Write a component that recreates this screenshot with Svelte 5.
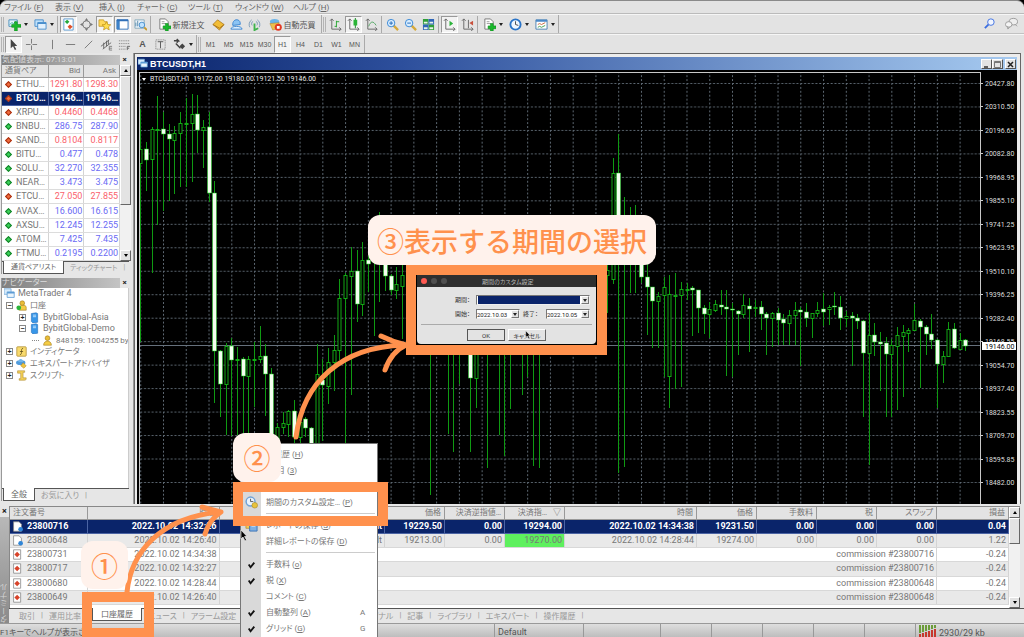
<script lang="ts">
  type Row = [string, string, string, 'up' | 'down'];
  type Candle = [number, number, number, number, 'w' | 'g'];

  const menus = [
    ['ファイル', 'F', 51], ['表示', 'V', 44], ['挿入', 'I', 38], ['チャート', 'C', 51],
    ['ツール', 'T', 47], ['ウィンドウ', 'W', 58], ['ヘルプ', 'H', 50]
  ] as const;

  const timeframes = ['M1', 'M5', 'M15', 'M30', 'H1', 'H4', 'D1', 'W1', 'MN'];

  const icons: Record<string, string> = {
    newChart: '<path d="M1 2h9v7H1z" fill="#e8f4ff" stroke="#4a8fbc"/><path d="M2 7l2-2 2 1 3-3" stroke="#3a9" fill="none"/><path d="M7 4h3v3h4v3h-4v4H7v-4H4V7h3z" fill="#19b82c" stroke="#0b8a1a" stroke-width=".6"/>',
    profiles: '<path d="M1 2h9v7H1z" fill="#bfe0fa" stroke="#4a8fcc"/><path d="M4 5h9v7H4z" fill="#e2f1fd" stroke="#4a8fcc"/><path d="M4 5.5h9" stroke="#4a8fcc" stroke-width="2"/>',
    market: '<path d="M2 1h10v12H2z" fill="#fff" stroke="#5b9bd0"/><path d="M3 4l2.500-2L8 4 5.500 6.500z" fill="#23a83a"/><path d="M6 9.500l2.500-2.500 3 2.500-3 2.500z" fill="#e0522a"/>',
    data: '<circle cx="7" cy="7" r="4" fill="none" stroke="#777"/><path d="M7 0l2 3H5zM7 14l2-3H5zM0 7l3-2v4zM14 7l-3-2v4z" fill="#777"/>',
    navigator: '<path d="M1 2h5l1 2h3v5H1z" fill="#ffd95a" stroke="#b98a10" stroke-width=".7"/><path d="M9 4l1.500 3 3.300.3-2.500 2.200.8 3.300L9 11l-3 1.800.8-3.300-2.500-2.200 3.300-.3z" fill="#ffdf4d" stroke="#b98a10" stroke-width=".7"/>',
    terminal: '<path d="M1 2h12v10H1z" fill="#fff" stroke="#2f6fb8"/><path d="M1 2h3v10H1z" fill="#3d82c9"/><path d="M1 2.500h12" stroke="#2f6fb8" stroke-width="2"/>',
    tester: '<path d="M1 2h10v9H1z" fill="#eef5fb" stroke="#8ab"/><path d="M2 9V5M4 9V3M6 9V6" stroke="#58a"/><circle cx="8.500" cy="7.500" r="3" fill="#bfe2ff" stroke="#4a8fcc"/><path d="M11 10l3 3" stroke="#c79a30" stroke-width="2"/>',
    order: '<path d="M2 1h6l3 3v8H2z" fill="#fff" stroke="#777"/><path d="M4 4h3M4 6h5" stroke="#999"/><path d="M8 6h3v2.500h3v3h-3V14H8v-2.500H5.500v-3H8z" fill="#19b82c" stroke="#0b8a1a" stroke-width=".6"/>',
    editor: '<path d="M1 7l5-5 7 5-5 6z" fill="#f2bd36" stroke="#a8741a" stroke-width=".8"/><path d="M1 7l7 4 5-4" stroke="#a8741a" fill="none"/>',
    signals: '<path d="M3 8c-1-8 9-8 8-1z" fill="#8cc4f4" stroke="#3c86d0"/><path d="M1 12c0-4 12-4 12 0z" fill="#dceefe" stroke="#3c86d0"/>',
    vps: '<path d="M2 10a6 6 0 0 1 2-8M12 10a6 6 0 0 0-2-8M4.500 8a3 3 0 0 1 1-4.500M9.500 8a3 3 0 0 0-1-4.500" stroke="#7a9ab8" fill="none"/><path d="M7 6v7l4-2" stroke="#3fb34c" stroke-width="2" fill="none"/>',
    auto: '<ellipse cx="6" cy="4" rx="5" ry="3" fill="#6cb4e8"/><path d="M1 6l10-1-1 6-6 2z" fill="#eec04c" stroke="#aa7a20" stroke-width=".5"/><circle cx="10" cy="10" r="3.800" fill="#e23a24"/><path d="M8.500 8.500h3v3h-3z" fill="#fff"/>',
    bars: '<path d="M3 1v11h10M1 3l2-2 2 2M11 10l2 2-2 2" stroke="#666" fill="none"/><path d="M8 3v7M8 4h3M6 9h2" stroke="#25a52f"/>',
    candles: '<path d="M3 1v11h10M1 3l2-2 2 2M11 10l2 2-2 2" stroke="#666" fill="none"/><path d="M9 0v11" stroke="#15851f"/><path d="M7 2h4v6H7z" fill="#29b436"/>',
    line: '<path d="M3 1v11h10M1 3l2-2 2 2M11 10l2 2-2 2" stroke="#666" fill="none"/><path d="M4 9c2-6 5-6 8-1" stroke="#54a864" fill="none"/>',
    zoomIn: '<path d="M8 8l5 5" stroke="#d6a93a" stroke-width="2.500"/><circle cx="5.500" cy="5.500" r="4" fill="#d8edff" stroke="#3385d6"/><path d="M3.500 5.500h4M5.500 3.500v4" stroke="#2268b8"/>',
    zoomOut: '<path d="M8 8l5 5" stroke="#d6a93a" stroke-width="2.500"/><circle cx="5.500" cy="5.500" r="4" fill="#d8edff" stroke="#3385d6"/><path d="M3.500 5.500h4" stroke="#2268b8"/>',
    tile: '<path d="M1 1h6v6H1zM7 7h6v6H7z" fill="#2f9e37"/><path d="M7 1h6v6H7zM1 7h6v6H1z" fill="#2f66b8"/><path d="M2 4h4v2H2zM8 4h4v2H8zM2 10h4v2H2zM8 10h4v2H8z" fill="#e8f4e8"/>',
    scroll: '<path d="M3 1v11h10M1 3l2-2 2 2M11 10l2 2-2 2" stroke="#666" fill="none"/><path d="M7 3l4 3-4 3z" fill="#2bb33a"/>',
    shift: '<path d="M3 1v11h10M1 3l2-2 2 2M11 10l2 2-2 2M8 2v9" stroke="#666" fill="none"/><path d="M13 3v5L9 5.500z" fill="#c8503c"/>',
    clock: '<circle cx="7" cy="7" r="5.500" fill="#eef6ff" stroke="#2a74c8" stroke-width="2"/><path d="M7 3.500V7l3 1" stroke="#444" fill="none"/>',
    period: '<circle cx="6" cy="6" r="4.800" fill="#eaf3fc" stroke="#6fa3d8" stroke-width="1.600"/><path d="M6 3v3h3" stroke="#555" fill="none"/><circle cx="10.500" cy="10" r="3" fill="#e8c33c" stroke="#a58422" stroke-width=".6"/>',
    template: '<path d="M1 2h12v10H1z" fill="#fff" stroke="#4a7fb0"/><path d="M1 3h12" stroke="#4a88c8" stroke-width="2"/><path d="M3 7l2-1 2 1 4-2" stroke="#c8683c" fill="none"/><path d="M3 10l2-1 2 1 4-2" stroke="#43a050" fill="none"/>',
    save: '<path d="M1 2h5l1 2h4v6H1z" fill="#f1cc55" stroke="#a8842c" stroke-width=".7"/><path d="M5 5h8v8H5z" fill="#7fb0e4" stroke="#3d74b4"/><path d="M7 5h4v3H7z" fill="#fff"/>',
    cursor: '<path d="M4 1v10l2.500-2 2 4 1.500-1-2-3.500H11z" fill="#444"/>',
    cross: '<path d="M7 1v5M7 8v5M1 7h5M8 7h5" stroke="#777"/>',
    vline: '<path d="M7 2v10" stroke="#777"/>',
    hline: '<path d="M2 7h10" stroke="#777"/>',
    trend: '<path d="M3 11l8-8" stroke="#777"/>',
    channel: '<path d="M1 9l9-7M3 12l9-7M4 5v6M7 3v6M9 2v5" stroke="#666"/><path d="M10 9h3M10 11h3M10 13h3M10 9v4" stroke="#666" stroke-width=".8"/>',
    fibo: '<path d="M1 3h12M1 6h12M1 9h7M1 12h7" stroke="#777" stroke-dasharray="1 1"/><path d="M10 13V9h3M10 11h2" stroke="#666" fill="none"/>',
    label: '<path d="M2 2h10v10H2z" fill="none" stroke="#777" stroke-dasharray="1 1"/><path d="M4 4h6M7 4v7" stroke="#555"/>',
    arrows: '<path d="M1 3h5L4 1M4 5l2-2M3 6l5 5" stroke="#444" stroke-width="1.500" fill="none"/><path d="M10 6l3 3-3 3-3-3z" fill="#444"/>',
    search: '<path d="M2 12l4-4" stroke="#3c6ee0" stroke-width="2"/><circle cx="8.500" cy="5.500" r="3.500" fill="#f0f5ff" stroke="#3c6ee0"/>',
    chart: '<path d="M0 1h9v7H0z" fill="#d7ebfb" stroke="#6fa6d6"/><path d="M4 5h9v7H4z" fill="#eaf5fd" stroke="#5c9bd4"/><path d="M4 6h9" stroke="#5c9bd4" stroke-width="2"/>',
    accounts: '<circle cx="8" cy="4" r="3" fill="#e9bd38" stroke="#9c7414" stroke-width=".7"/><path d="M4 13V9c1-3 9-3 9 0v4z" fill="#f4cc44" stroke="#9c7414" stroke-width=".7"/><circle cx="3.500" cy="10" r="3" fill="#2bb53b"/>',
    server: '<path d="M3 2l6-1 2 1v11l-6 1-2-2z" fill="#3796e8" stroke="#1d67b4" stroke-width=".7"/><path d="M5 4h4M5 6h4" stroke="#d7edff"/>',
    user: '<circle cx="7" cy="4" r="3" fill="#e9bd38" stroke="#9c7414" stroke-width=".7"/><path d="M2 13c0-7 10-7 10 0z" fill="#f4cc44" stroke="#9c7414" stroke-width=".7"/>',
    indicator: '<rect x="1" y="1" width="12" height="12" rx="1" fill="#f8da6c" stroke="#b1913a"/><path d="M9 3c-2 0-2 2-2 4s0 4-2 4M5 7h4" stroke="#5a4a18" fill="none"/>',
    expert: '<ellipse cx="6" cy="6" rx="6" ry="3" fill="#4f9bdc"/><path d="M3 5c0-5 6-5 6 0z" fill="#6fb5ec"/><path d="M9 6l4 4-3 3-4-3z" fill="#efc440" stroke="#a8801c" stroke-width=".6"/>',
    script: '<path d="M2 1h9v2H9v7h4c0 3-1 3-2 3H4v-2h2V4H2z" fill="#f4d258" stroke="#a8842c" stroke-width=".7"/>'
  };

  const quotes: Row[] = [
    ['ETHU…', '1291.80', '1298.30', 'down'],
    ['BTCU…', '19146…', '19146…', 'down'],
    ['XRPU…', '0.4460', '0.4468', 'down'],
    ['BNBU…', '286.75', '287.90', 'up'],
    ['SAND…', '0.8104', '0.8117', 'down'],
    ['BITU…', '0.477', '0.478', 'up'],
    ['SOLU…', '32.270', '32.355', 'up'],
    ['NEAR…', '3.473', '3.475', 'up'],
    ['ETCU…', '27.050', '27.855', 'down'],
    ['AVAX…', '16.600', '16.615', 'up'],
    ['AXSU…', '12.245', '12.255', 'up'],
    ['ATOM…', '7.425', '7.435', 'up'],
    ['FTMU…', '0.2195', '0.2200', 'up']
  ];

  const tree = [
    { level: 0, icon: 'chart', text: 'MetaTrader 4', box: '' },
    { level: 1, icon: 'accounts', text: '口座', box: '−' },
    { level: 2, icon: 'server', text: 'BybitGlobal-Asia', box: '+' },
    { level: 2, icon: 'server', text: 'BybitGlobal-Demo', box: '−' },
    { level: 3, icon: 'user', text: '848159: 1004255 by', box: '' },
    { level: 1, icon: 'indicator', text: 'インディケータ', box: '+' },
    { level: 1, icon: 'expert', text: 'エキスパートアドバイザ', box: '+' },
    { level: 1, icon: 'script', text: 'スクリプト', box: '+' }
  ];

  const prices = [
    '20427.80', '20310.50', '20196.65', '20082.80', '19968.95', '19855.10', '19741.25', '19623.95', '19510.10',
    '19396.25', '19282.40', '19168.55', '19054.70', '18937.40', '18823.55', '18709.70', '18595.85', '18482.00'
  ];

  const firstX = 1.3;
  const stepX = 5.69;
  const firstY = 11;
  const stepY = 23.47;

  // bars left to right: high, body top, body bottom, low (screen y, chart starts at 72)
  const runs: { from: number; bars: Candle[] }[] = [
    {
      from: 0,
      bars: [
        [109, 149, 163, 342, 'g'], [142, 149, 160, 191, 'w'], [127, 129, 159, 273, 'g'], [96, 129, 129, 225, 'g'],
        [112, 129, 134, 211, 'w'], [124, 134, 139, 201, 'w'], [126, 133, 140, 194, 'g'], [112, 123, 133, 187, 'g'],
        [98, 123, 123, 187, 'g'], [94, 114, 123, 182, 'g'], [95, 114, 130, 153, 'w'], [120, 127, 130, 168, 'g'],
        [112, 127, 193, 202, 'w'], [181, 193, 351, 403, 'w'], [350, 351, 384, 417, 'w'], [343, 346, 384, 435, 'g'],
        [338, 346, 360, 436, 'w'], [347, 359, 359, 435, 'g'], [357, 359, 376, 435, 'w'], [356, 359, 376, 435, 'g'],
        [342, 359, 359, 407, 'g'], [326, 356, 359, 363, 'g'], [344, 356, 374, 416, 'w'], [368, 374, 436, 460, 'w'],
        [423, 427, 440, 450, 'g'], [412, 423, 427, 434, 'g'], [410, 411, 424, 437, 'g'], [400, 411, 437, 450, 'w'],
        [415, 422, 437, 445, 'g'], [417, 419, 428, 437, 'w'], [427, 428, 450, 460, 'w'], [344, 374, 450, 460, 'g'],
        [359, 380, 385, 441, 'w'], [348, 362, 386, 404, 'g'], [335, 350, 362, 391, 'g'], [279, 298, 350, 360, 'g'],
        [273, 275, 298, 450, 'g'], [247, 271, 276, 395, 'g'], [250, 271, 304, 322, 'w'], [242, 260, 304, 316, 'g'],
        [235, 260, 264, 292, 'w'], [230, 250, 262, 336, 'g'], [212, 240, 250, 302, 'g'], [235, 240, 276, 291, 'w'],
        [274, 276, 290, 295, 'w'], [267, 284, 290, 299, 'g'], [262, 275, 286, 339, 'g']
      ]
    },
    { from: 51, bars: [[280, 300, 330, 495, 'g']] },
    { from: 54, bars: [[290, 300, 320, 434, 'g'], [290, 300, 330, 452, 'g'], [290, 300, 330, 384, 'g']] },
    { from: 58, bars: [[290, 320, 378, 452, 'w'], [290, 320, 378, 408, 'g']] },
    { from: 61, bars: [[290, 300, 320, 468, 'g']] },
    { from: 63, bars: [[290, 300, 320, 435, 'g'], [290, 300, 320, 456, 'g'], [290, 300, 320, 409, 'g']] },
    {
      from: 67,
      bars: [[290, 300, 320, 395, 'g'], [290, 300, 320, 377, 'g'], [290, 300, 320, 466, 'g'], [290, 300, 320, 468, 'g']]
    },
    {
      from: 82,
      bars: [
        [255, 270, 275, 313, 'g'], [158, 173, 279, 284, 'g'], [134, 173, 235, 473, 'w'], [197, 235, 250, 467, 'g'],
        [207, 240, 250, 293, 'g'], [205, 240, 262, 293, 'g'], [255, 262, 277, 283, 'w'], [260, 277, 287, 335, 'w'],
        [287, 287, 301, 348, 'w'], [292, 296, 301, 348, 'g'], [277, 287, 295, 377, 'g'], [275, 294, 376, 408, 'g'],
        [273, 295, 295, 389, 'g'], [282, 289, 295, 387, 'g'], [283, 289, 289, 300, 'g'], [286, 288, 290, 336, 'w'],
        [290, 290, 308, 333, 'w'], [305, 308, 314, 334, 'w'], [302, 309, 314, 338, 'g'], [300, 304, 310, 312, 'g'],
        [290, 305, 307, 315, 'w'], [290, 307, 309, 376, 'w'], [303, 309, 310, 377, 'w'], [310, 311, 314, 355, 'w'],
        [294, 305, 314, 318, 'g'], [298, 306, 309, 352, 'w'], [300, 307, 307, 317, 'g'], [301, 307, 314, 330, 'w'],
        [312, 314, 318, 355, 'w'], [312, 313, 318, 347, 'g'], [308, 313, 320, 345, 'w'], [314, 319, 323, 345, 'w'],
        [310, 315, 323, 345, 'g'], [302, 310, 315, 345, 'g'], [307, 310, 312, 366, 'w'], [303, 312, 318, 327, 'w'],
        [313, 313, 318, 338, 'g'], [302, 310, 313, 317, 'g'], [293, 309, 312, 326, 'w'], [305, 307, 309, 325, 'g'],
        [292, 306, 307, 315, 'w'], [296, 307, 318, 330, 'w'], [311, 316, 318, 327, 'g'], [312, 316, 318, 366, 'w'],
        [314, 318, 321, 329, 'w'], [320, 321, 353, 417, 'w'], [313, 335, 353, 465, 'g'], [323, 335, 342, 356, 'w'],
        [332, 342, 344, 391, 'w'], [337, 343, 354, 417, 'w'], [339, 345, 354, 417, 'g'], [327, 335, 346, 410, 'g'],
        [325, 332, 336, 397, 'g'], [328, 330, 333, 352, 'g'], [304, 320, 330, 331, 'g'], [319, 321, 327, 388, 'w'],
        [325, 327, 334, 355, 'w'], [314, 334, 340, 349, 'w'], [339, 340, 364, 408, 'w'], [351, 356, 364, 383, 'g'],
        [322, 329, 356, 357, 'g'], [323, 329, 348, 349, 'w'], [333, 340, 349, 350, 'g'], [339, 340, 346, 351, 'w']
      ]
    }
  ];

  const candles = runs.flatMap(({ from, bars }) =>
    bars.map(([high, top, bottom, low, kind], i) => ({
      x: Math.round(firstX + (from + i) * stepX) - 1,
      high: high - 73,
      top: top - 73,
      height: Math.max(1, bottom - top),
      low: low - 73,
      kind
    }))
  );

  const orders = [
    { id: '23800716', time: '2022.10.02 14:32:26', symbol: 'btcusdt', open: '19229.50', sl: '0.00', tp: '19294.00', close: '2022.10.02 14:34:38', price: '19231.50', profit: '0.04' },
    { id: '23800648', time: '2022.10.02 14:26:40', symbol: 'btcusdt', open: '19213.00', sl: '0.00', tp: '19270.00', close: '2022.10.02 14:28:44', price: '19274.00', profit: '1.22' }
  ];

  const commissions = [
    ['23800731', '2022.10.02 14:34:38', '23800716'],
    ['23800717', '2022.10.02 14:32:27', '23800716'],
    ['23800680', '2022.10.02 14:28:44', '23800648'],
    ['23800649', '2022.10.02 14:26:40', '23800648']
  ];

  const tabs = ['取引', '運用比率', '口座履歴', 'ニュース', 'アラーム設定', 'メールボックス', 'マーケット', 'シグナル', '記事', 'ライブラリ', 'エキスパート', '操作履歴'];

  const contextItems = [
    { text: '全履歴', key: 'H' },
    { text: '3ヶ月', key: '3' },
    { text: '1ヶ月', key: 'M' },
    { text: '期間のカスタム設定…', key: 'P', icon: 'period' },
    { sep: true },
    { text: 'レポートの保存', key: 'S', icon: 'save' },
    { text: '詳細レポートの保存', key: 'D' },
    { sep: true },
    { text: '手数料', key: 'o', checked: true },
    { text: '税', key: 'X', checked: true },
    { text: 'コメント', key: 'C' },
    { text: '自動整列', key: 'A', checked: true, hint: 'A' },
    { text: 'グリッド', key: 'G', checked: true, hint: 'G' }
  ];
</script>

{#snippet icon(name: string)}
  <svg class="icon" viewBox="0 0 14 14" aria-hidden="true">{@html icons[name]}</svg>
{/snippet}

{#snippet tool(name: string, on = false)}
  <button class="tool" class:on aria-label={name}>{@render icon(name)}</button>
{/snippet}

{#snippet drop(name: string)}
  <button class="tool drop" aria-label={name}>{@render icon(name)}<i class="caret"></i></button>
{/snippet}

{#snippet pointer()}
  <svg viewBox="0 0 8 13" aria-hidden="true"><path d="M1 1v9l2-2 2 4 1.500-1-2-3.500H7z" fill="#000" stroke="#fff" stroke-width=".6" /></svg>
{/snippet}

<div class="app">
  <nav class="menubar">
    {#each menus as [name, key, width]}
      <button style:width="{width}px">{name} (<u>{key}</u>)</button>
    {/each}
  </nav>

  <div class="toolrow">
    <div class="toolbar">
      {@render drop('newChart')}
      {@render drop('profiles')}
      <i class="sep"></i>
      {@render tool('market', true)}
      {@render tool('data')}
      {@render tool('navigator', true)}
      {@render tool('terminal', true)}
      {@render tool('tester')}
      <i class="sep"></i>
      <button class="tool wide">{@render icon('order')}新規注文</button>
      {@render tool('editor')}
      {@render tool('signals')}
      {@render tool('vps')}
      <button class="tool wide">{@render icon('auto')}自動売買</button>
    </div>
    <div class="toolbar">
      {@render tool('bars')}
      {@render tool('candles', true)}
      {@render tool('line')}
      <i class="sep"></i>
      {@render tool('zoomIn')}
      {@render tool('zoomOut')}
      {@render tool('tile')}
      <i class="sep"></i>
      {@render tool('scroll', true)}
      {@render tool('shift')}
      <i class="sep"></i>
      {@render drop('order')}
      {@render drop('clock')}
      {@render drop('template')}
    </div>
    <div class="corner">
      {@render tool('search')}
      <button class="tool" aria-label="chat">
        <svg class="icon" viewBox="0 0 14 14" aria-hidden="true">
          <ellipse cx="9" cy="5" rx="4.500" ry="3.500" fill="#eee" stroke="#999" />
          <ellipse cx="4" cy="8" rx="3.500" ry="3" fill="#f4f4f4" stroke="#999" />
          <path d="M3 10v3l2-2M11 8l2 2" stroke="#999" fill="none" />
        </svg>
      </button>
    </div>
  </div>

  <div class="toolrow second">
    <div class="toolbar">
      {@render tool('cursor', true)}
      {@render tool('cross')}
      <i class="sep blank"></i>
      {@render tool('vline')}
      {@render tool('hline')}
      {@render tool('trend')}
      {@render tool('channel')}
      {@render tool('fibo')}
      <button class="tool letter">A</button>
      {@render tool('label')}
      {@render drop('arrows')}
    </div>
    <div class="toolbar">
      {#each timeframes as tf}
        <button class="tool" class:on={tf === 'H1'}>{tf}</button>
      {/each}
    </div>
  </div>

  <main class="workspace">
    <aside class="side">
      <section class="panel">
        <header class="caption"><span>気配値表示: 07:13:01</span><button aria-label="close">×</button></header>
        <div class="list">
          <table class="quotes">
            <thead>
              <tr><th>通貨ペア</th><th>Bid</th><th>Ask</th></tr>
            </thead>
            <tbody>
              {#each quotes as [symbol, bid, ask, dir], i}
                <tr class={dir} class:selected={i === 1}>
                  <td><i class="mark"></i>{symbol}</td><td>{bid}</td><td>{ask}</td>
                </tr>
              {/each}
            </tbody>
          </table>
          <div class="scroll"><i class="arrow up"></i><i class="thumb long"></i><i class="arrow"></i></div>
        </div>
        <div class="tabs small"><button class="active">通貨ペアリスト</button><button>ティックチャート</button><span>|</span></div>
      </section>

      <section class="panel grow">
        <header class="caption"><span>ナビゲーター</span><button aria-label="close">×</button></header>
        <div class="treebox">
          <ul class="tree">
            {#each tree as node}
              <li class="level{node.level}">
                {#if node.level > 0}<i class="box" class:leaf={!node.box}>{node.box}</i>{/if}
                {@render icon(node.icon)}<span>{node.text}</span>
              </li>
            {/each}
          </ul>
        </div>
        <div class="tabs"><button class="active">全般</button><button>お気に入り</button><span>|</span></div>
      </section>
    </aside>

    <section class="chart">
      <header class="title">
        {@render icon('chart')}<b>BTCUSDT,H1</b>
        <button aria-label="minimize"><svg viewBox="0 0 9 9"><path d="M2 7h4" stroke="#333" stroke-width="1.500" /></svg></button>
        <button aria-label="maximize"><svg viewBox="0 0 9 9"><path d="M1.500 1.500h6v6h-6zM1 2.500h7" fill="none" stroke="#777" /></svg></button>
        <button class="close" aria-label="close"><svg viewBox="0 0 9 9"><path d="M2 2l5 5M7 2L2 7" stroke="#222" stroke-width="1.500" /></svg></button>
      </header>
      <div class="canvas">
        <div class="plot">
          <svg class="fill" aria-hidden="true">
            <defs>
              <pattern id="grid" x="23" y={firstY - 1} width={stepX * 4} height={stepY} patternUnits="userSpaceOnUse">
                <path d="M0 .5H23" stroke="#5d6872" stroke-dasharray="2 1.800" />
                <path d="M.5 0V24" stroke="#5d6872" stroke-dasharray="2 1.900" />
              </pattern>
            </defs>
            <rect width="100%" height="100%" fill="url(#grid)" />
            <line x1="0" x2="100%" y1="272.500" y2="272.500" stroke="#66717d" />
            {#each candles as c}
              <line x1={c.x + 0.5} x2={c.x + 0.5} y1={c.high} y2={c.low} stroke="#0f9a12" />
              {#if c.kind === 'w'}
                <rect x={c.x - 1.5} y={c.top} width="4" height={c.height} fill="#f4fff0" stroke="#19d01c" stroke-width=".5" />
              {:else}
                <rect x={c.x - 1} y={c.top + 0.5} width="3" height={c.height} fill="#000" stroke="#12a814" />
              {/if}
            {/each}
          </svg>
          <p class="ohlc"><i class="caret"></i>BTCUSDT,H1&nbsp; 19172.00 19180.00 19121.50 19146.00</p>
        </div>
        <svg class="axis" role="img" aria-label="price">
          {#each prices as price, i}
            {@const y = Math.round(firstY + i * stepY)}
            <path d="M0 {y}.500h2" stroke="#ccc" />
            <text x="4" y={y + 3}>{price}</text>
          {/each}
          <rect x="1" y="270" width="34" height="8" fill="#fff" />
          <text class="now" x="4" y="277">19146.00</text>
        </svg>
      </div>
    </section>
  </main>

  <section class="terminal">
    <div class="strip"><button aria-label="close">×</button><span>ターミナル</span></div>
    <div class="body">
      <div class="history">
        <table class="orders">
          <colgroup>
            <col class="c77" /><col class="c132" /><col /><col class="c60" /><col class="c60" /><col class="c60" />
            <col class="c132" /><col class="c60" /><col class="c60" /><col class="c60" /><col class="c60" /><col class="c72" />
          </colgroup>
          <thead>
            <tr>
              <th>注文番号</th><th>時間</th><th>通貨ペア</th><th>価格</th><th>決済逆指値…</th><th>決済指… &nbsp; ▽</th>
              <th>時間</th><th>価格</th><th>手数料</th><th>税</th><th>スワップ</th><th>損益</th>
            </tr>
          </thead>
          <tbody>
            {#each orders as o, i}
              <tr class:selected={i === 0}>
                <td>
                  <svg class="icon" viewBox="0 0 14 14" aria-hidden="true">
                    <path d="M2 1h7l3 3v9H2z" fill="#fff" stroke="#888" /><circle cx="11" cy="10.500" r="3" fill="#2f86d8" />
                  </svg>{o.id}
                </td>
                <td>{o.time}</td><td>{o.symbol}</td><td>{o.open}</td><td>{o.sl}</td><td class:hit={i === 1}>{o.tp}</td>
                <td>{o.close}</td><td>{o.price}</td><td>0.00</td><td>0.00</td><td>0.00</td><td>{o.profit}</td>
              </tr>
            {/each}
            {#each commissions as [id, time, ref]}
              <tr>
                <td>
                  <svg class="icon" viewBox="0 0 14 14" aria-hidden="true">
                    <path d="M2 1h9v12H2z" fill="#fff" stroke="#888" /><path d="M6.500 3.500L10 7l-3.500 3.500L3 7z" fill="#d8432a" />
                  </svg>{id}
                </td>
                <td>{time}</td><td colspan="9">commission #{ref}</td><td>-0.24</td>
              </tr>
            {/each}
          </tbody>
        </table>
        <div class="scroll"><i class="arrow up"></i><i class="thumb"></i><i class="arrow"></i></div>
      </div>
      <div class="tabs bottom">
        {#each tabs as tab}
          <button class:active={tab === '口座履歴'}>{tab}</button>
          {#if tab !== '口座履歴' && tab !== '運用比率'}<span>|</span>{/if}
        {/each}
      </div>
    </div>
  </section>

  <footer class="status">
    <span class="help">F1キーでヘルプが表示されます</span>
    <span class="profile">Default</span>
    <span></span><span></span><span></span><span></span><span></span><span></span>
    <span class="net">
      <svg viewBox="0 0 17 12" aria-hidden="true">
        <path d="M1 0v8M4 0v7M7 0v6M10 0v5M13 0v4M16 0v3" stroke="#6c9c3a" stroke-width="2" />
        <path d="M1 9v3M4 8v4M7 7v5M10 6v6M13 5v7M16 4v8" stroke="#c8372c" stroke-width="2" />
      </svg>2930/29 kb
    </span>
  </footer>

  <div class="context" role="menu">
    {#each contextItems as item}
      {#if item.sep}
        <hr />
      {:else}
        <button role="menuitem">
          <span class="gutter">{#if item.icon}{@render icon(item.icon)}{:else if item.checked}<svg class="icon" viewBox="0 0 14 14"><path d="M4 7l2 3 4-5" stroke="#111" stroke-width="2" fill="none" /></svg>{/if}</span>
          <span class="name">{item.text} (<u>{item.key}</u>)</span>
          {#if item.hint}<kbd>{item.hint}</kbd>{/if}
        </button>
      {/if}
    {/each}
  </div>

  <div class="frame frame-tab"></div>
  <div class="frame frame-menu"></div>
  <form class="frame frame-dialog">
    <div class="dialog">
      <div class="bar"><i class="light red"></i><i class="light"></i><i class="light"></i><span>期間のカスタム設定</span></div>
      <div class="fields">
        <label for="range">期間：</label>
        <span class="combo span"><select id="range" class="navy"><option></option></select><i><b class="caret"></b></i></span>
        <label for="from">開始：</label>
        <span class="combo"><select id="from"><option>2022.10.03</option></select><i><b class="caret"></b></i></span>
        <label for="to">終了：</label>
        <span class="combo"><select id="to"><option>2022.10.05</option></select><i><b class="caret"></b></i></span>
      </div>
      <div class="actions"><button type="button" class="ok">OK</button><button type="button">キャンセル</button></div>
    </div>
  </form>

  <svg class="arrows" aria-hidden="true">
    <g fill="none" stroke="#ff914d" stroke-width="5" stroke-linecap="round" stroke-linejoin="round">
      <path d="M127 592C131 552 160 518 219 512" />
      <path d="M202 507Q212 510 221 512Q209 520 205 534" />
      <path d="M296 437C303 382 341 347 404 345" />
      <path d="M381 336Q393 342 406 345Q391 352 385 370" />
    </g>
  </svg>

  <div class="badge one">①</div>
  <div class="badge two">②</div>
  <div class="badge three">③表示する期間の選択</div>

  <div class="mouse first">{@render pointer()}</div>
  <div class="mouse last">{@render pointer()}</div>
</div>

<style>
  :global(body) {
    background: #000;
  }

  .app {
    position: relative;
    display: flex;
    flex-direction: column;
    height: 100vh;
    overflow: hidden;
    box-sizing: border-box;
    border-top: 1px solid #8a8a8a;
    border-radius: 7px 7px 0 0;
    background: #e3e3e3;
    color: #777;
    font: 9px/11px Roboto, 'Noto Sans CJK JP', sans-serif;
    font-feature-settings: 'palt';
  }

  .app *,
  .app *::before {
    box-sizing: border-box;
  }

  button,
  select {
    margin: 0;
    padding: 0;
    border: 0;
    background: none;
    color: inherit;
    font: inherit;
    font-feature-settings: inherit;
    white-space: nowrap;
  }

  svg {
    display: block;
  }

  .icon {
    width: 13px;
    height: 13px;
    flex: none;
  }

  .caret {
    width: 0;
    height: 0;
    border: 2px solid transparent;
    border-top: 3px solid #222;
    border-bottom: 0;
  }

  .menubar {
    display: flex;
    height: 13px;
    padding-left: 4px;
    border-bottom: 1px solid #bbb;
    color: #666;
    font-size: 8px;
  }

  .menubar button {
    text-align: left;
  }

  .toolrow {
    display: flex;
    height: 20px;
    border-top: 1px solid #f6f6f6;
    border-bottom: 1px solid #c2c2c2;
  }

  .second {
    height: 19px;
    border-bottom: 0;
  }

  .toolbar {
    display: flex;
    align-items: center;
    gap: 1px;
    padding: 0 1px 0 1px;
    border-right: 1px solid #aaa;
  }

  .toolbar::before {
    content: '';
    width: 3px;
    height: 15px;
    border: 1px solid #b4b4b4;
    border-width: 0 1px;
  }

  .tool {
    display: flex;
    align-items: center;
    justify-content: center;
    width: 17px;
    height: 17px;
    color: #555;
    font: 7px 'Liberation Sans', sans-serif;
  }

  .tool.on {
    border: 1px solid #999;
    border-right-color: #fff;
    border-bottom-color: #fff;
    background: #f3f3f3;
  }

  .tool.drop {
    width: 25px;
    gap: 3px;
  }

  .tool.wide {
    width: 56px;
    gap: 2px;
    font: 8px 'Noto Sans CJK JP', sans-serif;
  }

  .tool.letter {
    font-size: 9px;
    font-weight: bold;
  }

  .sep {
    width: 1px;
    height: 17px;
    margin-right: 1px;
    background: #aaa;
  }

  .blank {
    background: none;
  }

  .corner {
    display: flex;
    gap: 5px;
    margin-left: auto;
    padding-right: 4px;
  }

  .workspace {
    display: flex;
    flex: 1;
    min-height: 0;
    background: #e6e6e6;
  }

  .side {
    display: flex;
    flex-direction: column;
    gap: 4px;
    width: 134px;
    flex: none;
    padding: 2px 4px 3px 1px;
    border-right: 1px solid #999;
  }

  .panel {
    display: flex;
    flex-direction: column;
    border-left: 1px solid #999;
  }

  .grow {
    flex: 1;
    min-height: 0;
  }

  .caption {
    display: flex;
    justify-content: space-between;
    height: 10px;
    color: #dcdcdc;
    font-size: 8px;
    line-height: 10px;
  }

  .caption span {
    flex: 1;
    background: linear-gradient(90deg, #808080, #c4c4c4);
  }

  .caption button {
    width: 9px;
    color: #222;
    font-weight: bold;
  }

  .list {
    display: flex;
    height: 196px;
    background: #fff;
  }

  table {
    border-collapse: collapse;
    table-layout: fixed;
  }

  th {
    padding: 0 3px;
    border-right: 1px solid #999;
    border-bottom: 1px solid #999;
    background: #e3e3e3;
    font-weight: normal;
    text-align: right;
    white-space: nowrap;
  }

  td {
    overflow: hidden;
    padding: 0 1px;
    border-right: 1px solid #d4d4d4;
    text-align: right;
    white-space: nowrap;
  }

  .quotes {
    flex: 1;
    height: 196px;
  }

  .quotes thead tr {
    height: 12px;
  }

  .quotes th {
    font-size: 8px;
  }

  .quotes td {
    border-bottom: 1px solid #dcdcdc;
  }

  .quotes th:first-child,
  .quotes td:first-child {
    width: 49px;
    padding-left: 3px;
    text-align: left;
  }

  .mark {
    display: inline-block;
    width: 5px;
    height: 5px;
    margin: 0 5px 0 1px;
    border: 1px solid #15812a;
    background: #3ad058;
    rotate: 45deg;
  }

  .down .mark {
    border-color: #a83010;
    background: #f06a3c;
  }

  .up td + td {
    color: #6a6af4;
  }

  .down td + td {
    color: #fa5f6c;
  }

  tr.selected td,
  tr.selected td + td {
    border-color: #4b64a4;
    background: #0a246a;
    color: #fff;
    font-weight: bold;
  }

  .scroll {
    display: flex;
    flex-direction: column;
    width: 11px;
    flex: none;
    background: #f1f1f1;
  }

  .arrow,
  .thumb {
    height: 11px;
    border: 1px solid #fff;
    border-right-color: #666;
    border-bottom-color: #666;
    background: #e3e3e3;
  }

  .arrow {
    margin-top: auto;
  }

  .arrow::before {
    content: '';
    display: block;
    width: 0;
    margin: 3px auto;
    border: 2px solid transparent;
    border-top: 3px solid #000;
    border-bottom: 0;
  }

  .arrow.up {
    margin-top: 0;
  }

  .arrow.up::before {
    rotate: 180deg;
  }

  .thumb {
    height: 26px;
  }

  .thumb.long {
    height: 129px;
  }

  .tabs {
    display: flex;
    height: 13px;
    border-top: 1px solid #555;
    color: #999;
    font-size: 8px;
  }

  .tabs.small {
    font-size: 7px;
  }

  .tabs button {
    margin: 0 6px;
  }

  .tabs .active {
    margin: -1px 0 0 1px;
    padding: 0 7px;
    border: 1px solid #555;
    border-top: 0;
    background: #fff;
    color: #666;
  }

  .treebox {
    flex: 1;
    background: #fff;
    border-right: 1px solid #ccc;
  }

  .tree {
    display: grid;
    grid-auto-rows: 1fr;
    height: 93px;
    margin: 0;
    padding: 0;
    overflow: hidden;
    list-style: none;
  }

  .tree li {
    display: flex;
    align-items: center;
    padding-left: 2px;
    white-space: nowrap;
  }

  .tree .icon {
    width: 11px;
    height: 11px;
    margin-right: 3px;
  }

  .tree .level1 {
    padding-left: 4px;
    font-size: 8px;
  }

  .tree .level2 {
    padding-left: 17px;
  }

  .tree .level3 {
    padding-left: 30px;
    font-size: 8px;
  }

  .box {
    width: 7px;
    height: 7px;
    margin-right: 3px;
    border: 1px solid #888;
    color: #222;
    font: bold 7px/5px 'Liberation Sans', sans-serif;
    text-align: center;
  }

  .leaf {
    height: 1px;
    border-width: 1px 0 0;
    border-style: dotted;
  }

  .chart {
    display: flex;
    flex-direction: column;
    flex: 1;
    min-width: 0;
    margin-right: 3px;
    padding: 3px 3px 0 2px;
    border: 1px solid #666;
    border-bottom: 0;
    background: #ececec;
  }

  .title {
    display: flex;
    align-items: center;
    height: 13px;
    padding: 0 1px;
    background: linear-gradient(90deg, #0a246a, #2d4f9c 30%, #a6caf0);
    color: #fff;
    font: 9px 'Liberation Sans', sans-serif;
  }

  .title .icon {
    width: 10px;
  }

  .title b {
    flex: 1;
    padding-left: 2px;
  }

  .title button {
    width: 11px;
    height: 10px;
    border: 1px solid #fff;
    border-right-color: #555;
    border-bottom-color: #555;
    background: #e3e3e3;
  }

  .title .close {
    margin-left: 2px;
  }

  .canvas {
    display: flex;
    flex: 1;
    min-height: 0;
    padding: 2px 0 0 2px;
    background: #000;
  }

  .plot {
    position: relative;
    flex: 1;
    min-width: 0;
    border: 1px solid #c8c8c8;
    border-bottom: 0;
  }

  .fill {
    width: 100%;
    height: 100%;
  }

  .ohlc {
    position: absolute;
    top: 1px;
    left: 2px;
    display: flex;
    align-items: center;
    gap: 4px;
    margin: 0;
    color: #e6e6e6;
    font-size: 7px;
    white-space: nowrap;
  }

  .ohlc .caret {
    border-top-color: #fff;
  }

  .axis {
    width: 36px;
    height: 100%;
    overflow: hidden;
    font-size: 7px;
    fill: #ddd;
  }

  .now {
    fill: #000;
  }

  .terminal {
    display: flex;
    height: 119px;
    padding-top: 2px;
    background: #e6e6e6;
  }

  .strip {
    display: flex;
    flex-direction: column;
    justify-content: space-between;
    width: 9px;
  }

  .strip button {
    color: #222;
    font-weight: bold;
  }

  .strip span {
    flex: 1;
    background: linear-gradient(#8a8a8a, #b8b8b8);
    color: #d4d4d4;
    font-size: 8px;
    line-height: 9px;
    writing-mode: vertical-rl;
    rotate: 180deg;
  }

  .body {
    flex: 1;
    min-width: 0;
  }

  .history {
    display: flex;
    height: 102px;
    margin-right: 4px;
    overflow: hidden;
    border: 1px solid #888;
    border-right: 0;
    border-bottom: 0;
    background: #fff;
  }

  .orders {
    flex: 1;
    height: 98px;
  }

  .orders thead tr {
    height: 12px;
  }

  .orders td {
    padding: 0 2px;
    border-bottom: 1px solid #d8d8d8;
  }

  .orders th {
    font-size: 8px;
  }

  .orders tbody tr:nth-child(even) {
    background: #e9e9e9;
  }

  .orders th:first-child,
  .orders td:first-child {
    text-align: left;
  }

  .orders td .icon {
    display: inline-block;
    width: 11px;
    height: 11px;
    margin-right: 4px;
    vertical-align: middle;
  }

  .orders td.hit {
    background: #5ef05e;
  }

  .c60 {
    width: 60px;
  }

  .c72 {
    width: 72px;
  }

  .c77 {
    width: 77px;
  }

  .c132 {
    width: 132px;
  }

  .bottom {
    height: 15px;
    padding-left: 4px;
    white-space: nowrap;
  }

  .bottom .active {
    height: 13px;
    margin-left: 5px;
    padding: 0 8px;
  }

  .status {
    display: flex;
    height: 14px;
    flex: none;
    overflow: hidden;
    border-top: 1px solid #999;
    background: linear-gradient(#dedede, #bdbdbd);
    color: #555;
    line-height: 17px;
  }

  .status span {
    width: 51px;
    border-left: 1px solid #999;
    white-space: nowrap;
  }

  .status .help {
    flex: 1;
    border: 0;
    font-size: 8px;
  }

  .status .profile {
    width: 89px;
    padding-left: 3px;
  }

  .status .profile + span {
    width: 77px;
  }

  .status .net {
    display: flex;
    gap: 3px;
    width: 109px;
    padding: 1px 3px;
  }

  .net svg {
    width: 17px;
    height: 12px;
  }

  .context {
    position: absolute;
    top: 442px;
    left: 240px;
    width: 138px;
    padding: 2px 1px;
    border: 1px solid #777;
    background: linear-gradient(90deg, #d9d9d9 20px, #fff 20px);
    font-size: 8px;
  }

  .context button {
    display: flex;
    align-items: center;
    width: 100%;
    height: 16px;
    text-align: left;
  }

  .gutter {
    width: 24px;
    padding-left: 3px;
  }

  .name {
    flex: 1;
  }

  .context kbd {
    width: 16px;
    font: inherit;
  }

  .context hr {
    height: 1px;
    margin: 3px 1px 3px 24px;
    border: 0;
    background: #ccc;
  }

  .frame {
    position: absolute;
    border: 10px solid #ff914d;
  }

  .frame-tab {
    top: 591px;
    left: 82px;
    width: 72px;
    height: 46px;
  }

  .frame-menu {
    top: 481px;
    left: 233px;
    width: 155px;
    height: 44px;
  }

  .frame-dialog {
    top: 264px;
    left: 406px;
    width: 201px;
    height: 90px;
    background: #000;
  }

  .dialog {
    height: 69px;
    margin: 0 1px;
    overflow: hidden;
    border-radius: 0 0 4px 4px;
    background: #e3e3e3;
    color: #333;
    font-size: 6px;
    line-height: 9px;
  }

  .bar {
    display: flex;
    align-items: center;
    gap: 4px;
    height: 12px;
    padding-left: 4px;
    background: #2f2f2f;
    color: #b8b8b8;
  }

  .bar span {
    margin-left: 31px;
  }

  .light {
    width: 6px;
    height: 6px;
    border-radius: 50%;
    background: #505050;
  }

  .red {
    background: #ff5a52;
  }

  .fields {
    display: grid;
    grid-template-columns: 18px 44px 20px 44px;
    gap: 4px 3px;
    margin: 0 4px;
    padding: 8px 0 5px 34px;
    border-bottom: 1px solid #aaa;
    white-space: nowrap;
  }

  .combo {
    display: flex;
    height: 10px;
    border: 1px solid #777;
    border-right-color: #eee;
    border-bottom-color: #eee;
    background: #fff;
  }

  .span {
    grid-column: span 3;
  }

  .combo select {
    flex: 1;
    min-width: 0;
    appearance: none;
    color: #222;
  }

  .combo .navy {
    margin: 0 1px;
    background: #0a246a;
  }

  .combo i {
    display: flex;
    align-items: center;
    justify-content: center;
    width: 8px;
    border: 1px solid #fff;
    border-right-color: #777;
    border-bottom-color: #777;
    background: #e3e3e3;
  }

  .actions {
    display: flex;
    gap: 3px;
    padding: 4px 0 0 50px;
  }

  .actions button {
    width: 38px;
    height: 12px;
    border: 1px solid #fff;
    border-right-color: #666;
    border-bottom-color: #666;
  }

  .actions .ok {
    border-color: #555;
  }

  .arrows {
    position: absolute;
    top: -1px;
    left: 0;
    width: 100%;
    height: 100%;
    pointer-events: none;
  }

  .badge {
    position: absolute;
    display: flex;
    align-items: center;
    justify-content: center;
    border-radius: 12px;
    background: #fff2ec;
    color: #ff914d;
    font: 500 27px/27px 'Noto Sans CJK JP', sans-serif;
    font-feature-settings: normal;
    white-space: nowrap;
  }

  .one {
    top: 540px;
    left: 81px;
    width: 47px;
    height: 48px;
  }

  .two {
    top: 432px;
    left: 233px;
    width: 48px;
    height: 49px;
  }

  .three {
    top: 214px;
    left: 368px;
    width: 288px;
    height: 50px;
  }

  .mouse {
    position: absolute;
    width: 8px;
    height: 13px;
  }

  .first {
    top: 528px;
    left: 240px;
  }

  .last {
    top: 329px;
    left: 525px;
    width: 6px;
    height: 10px;
  }
</style>
